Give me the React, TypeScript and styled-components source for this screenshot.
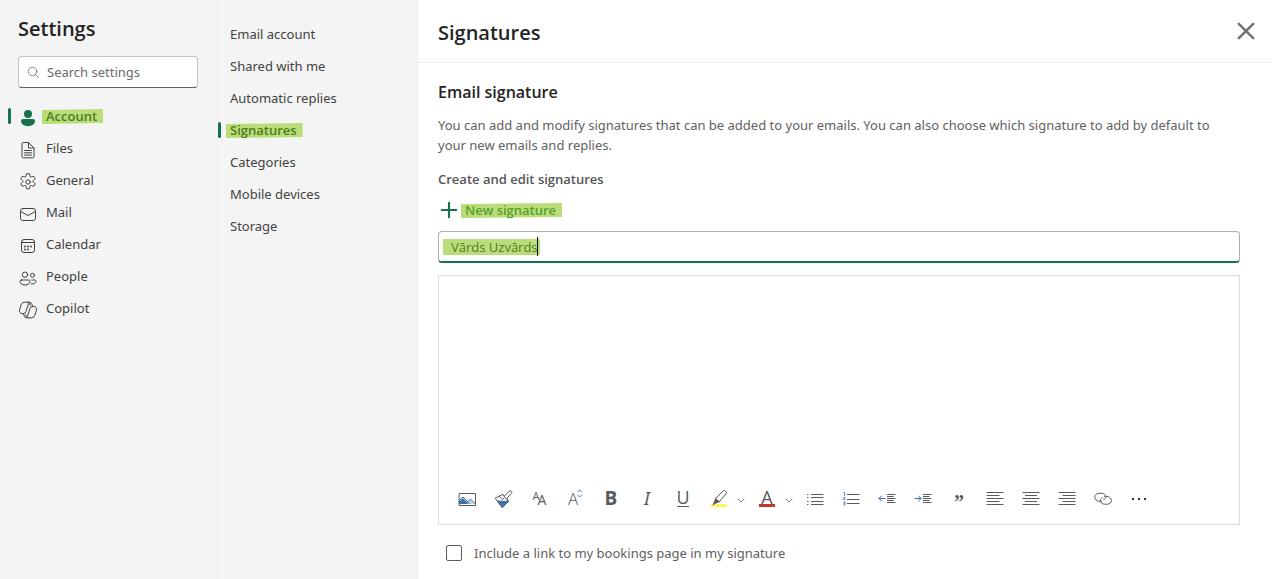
import React, { useState } from 'react';
import styled, { createGlobalStyle } from 'styled-components';

const green = '#17714f';
const ink = '#424242';
const marker = '#badd7a';
const displayFont = '"Open Sans", "Noto Sans", sans-serif';

const GlobalStyle = createGlobalStyle`
  * { box-sizing: border-box; }
  body {
    margin: 0;
    background: #ffffff;
    color: ${ink};
    font-family: "Noto Sans", "Open Sans", sans-serif;
    font-size: 13px;
    line-height: 20px;
  }
  button, input, textarea { font: inherit; color: inherit; }
`;

const Page = styled.div`
  display: grid;
  grid-template-columns: 218px 200px minmax(0, 1fr);
  min-height: 100vh;
`;

const Sidebar = styled.aside`
  background: #f4f4f4;
  border-right: 1px solid #f0f0f0;
  padding: 14px 19px 20px 8px;
`;

const AppTitle = styled.h1`
  margin: 0 0 12px 10px;
  font-family: ${displayFont};
  font-size: 20px;
  line-height: 30px;
  font-weight: 600;
  color: #242424;
`;

const SearchBox = styled.label`
  display: flex;
  align-items: center;
  gap: 7px;
  height: 32px;
  margin-left: 10px;
  padding: 0 8px;
  background: #ffffff;
  border: 1px solid #c6c6c6;
  border-bottom-color: #5c5c5c;
  border-radius: 4px;
  color: #6a6a6a;

  svg { flex: none; }
`;

const SearchInput = styled.input`
  flex: 1;
  min-width: 0;
  padding: 0;
  border: 0;
  outline: 0;
  background: transparent;

  &::placeholder { color: #6a6a6a; opacity: 1; }
`;

const NavList = styled.ul<{ $gap: number }>`
  list-style: none;
  margin: ${(p) => p.$gap}px 0 0;
  padding: 0;
`;

const NavLink = styled.a<{ $active?: boolean; $inset: number }>`
  display: flex;
  align-items: center;
  height: 32px;
  color: ${(p) => (p.$active ? '#4c7d1c' : ink)};
  font-family: ${(p) => (p.$active ? displayFont : 'inherit')};
  font-weight: ${(p) => (p.$active ? 600 : 400)};
  text-decoration: none;

  &::before {
    content: "";
    flex: none;
    width: 3px;
    height: 16px;
    margin-right: ${(p) => p.$inset}px;
    border-radius: 2px;
    background: ${(p) => (p.$active ? green : 'transparent')};
  }

  svg {
    flex: none;
    margin: 3px 8px 0 0;
    color: ${(p) => (p.$active ? green : ink)};
  }
`;

const Marked = styled.span`
  position: relative;
  isolation: isolate;

  &::before {
    content: "";
    position: absolute;
    z-index: -1;
    inset: 3px -6px 2px -4px;
    background: ${marker};
    clip-path: polygon(0 1px, 100% 0, 100% calc(100% - 1px), 0 100%);
  }
`;

const SubNav = styled.nav`
  background: #f4f4f4;
  border-right: 1px solid #ededed;
  padding-top: 18px;
`;

const Main = styled.main`
  display: flex;
  flex-direction: column;
`;

const Header = styled.header`
  display: flex;
  align-items: center;
  justify-content: space-between;
  height: 63px;
  padding: 0 16px 0 20px;
  border-bottom: 1px solid #ececec;
`;

const PanelTitle = styled.h2`
  margin: 0;
  padding-top: 4px;
  font-family: ${displayFont};
  font-size: 20px;
  line-height: 30px;
  font-weight: 600;
  color: #242424;
`;

const IconButton = styled.button`
  display: flex;
  padding: 0;
  border: 0;
  background: none;
  color: #747474;
  cursor: pointer;
`;

const Body = styled.div`
  padding: 18px 32px 16px 20px;
`;

const SectionTitle = styled.h3`
  margin: 0 0 12px;
  font-family: ${displayFont};
  font-size: 16px;
  line-height: 22px;
  font-weight: 600;
  color: #242424;
`;

const Description = styled.p`
  margin: 0;
  color: #616161;
`;

const GroupTitle = styled.h4`
  margin: 14px 0 0;
  font-family: ${displayFont};
  font-size: 13px;
  font-weight: 600;
  color: #555555;
`;

const NewButton = styled.button`
  display: flex;
  align-items: center;
  gap: 7px;
  height: 32px;
  margin: 5px 0;
  padding: 0 2px;
  border: 0;
  background: none;
  color: #55a02c;
  font-family: ${displayFont};
  font-weight: 600;
  cursor: pointer;

  svg { color: ${green}; }
`;

const NameField = styled.div`
  position: relative;
  display: flex;
  height: 32px;
  border: 1px solid #b0b0b0;
  border-bottom: 2px solid ${green};
  border-radius: 4px;
  font-family: ${displayFont};
`;

const NameMark = styled.span`
  position: absolute;
  left: 4px;
  top: 7px;
  height: 16px;
  padding: 0 2px 0 8px;
  background: ${marker};
  color: transparent;
  line-height: 16px;
  pointer-events: none;

  &::after {
    content: "";
    position: absolute;
    right: 2px;
    top: -2px;
    width: 1px;
    height: 19px;
    background: #111111;
  }
`;

const NameInput = styled.input`
  position: relative;
  flex: 1;
  min-width: 0;
  padding: 0 12px;
  border: 0;
  outline: 0;
  background: transparent;
  color: #4f7f23;
`;

const Editor = styled.div`
  display: flex;
  flex-direction: column;
  margin-top: 12px;
  border: 1px solid #dcdcdc;
`;

const EditorText = styled.textarea`
  display: block;
  height: 205px;
  padding: 10px 12px;
  border: 0;
  outline: 0;
  resize: none;
  background: transparent;
`;

const Toolbar = styled.div`
  display: flex;
  align-items: center;
  flex-wrap: wrap;
  padding: 0 10px 7px;
`;

const Tool = styled.button`
  display: flex;
  align-items: center;
  justify-content: center;
  width: 36px;
  height: 36px;
  padding: 0;
  border: 0;
  background: none;
  color: #5a5a5a;
  font-family: ${displayFont};
  cursor: pointer;
`;

const Caret = styled(Tool)`
  justify-content: flex-start;
  width: 12px;
`;

const CheckRow = styled.label`
  display: flex;
  align-items: center;
  gap: 12px;
  margin-top: 18px;
  padding-left: 8px;
  color: #616161;
`;

const Checkbox = styled.input`
  appearance: none;
  flex: none;
  width: 16px;
  height: 16px;
  margin: 0;
  border: 1px solid #5c5c5c;
  border-radius: 2px;
  background: #ffffff;

  &:checked { background: ${green}; }
`;

const Svg = styled.svg`
  overflow: visible;
`;

type IconProps = { size?: number; width?: number; children: React.ReactNode };

const Icon = ({ size = 20, width = 1, children }: IconProps) => (
  <Svg
    width={size}
    height={size}
    viewBox="0 0 20 20"
    fill="none"
    stroke="currentColor"
    strokeWidth={width}
    strokeLinecap="round"
    strokeLinejoin="round"
    aria-hidden="true"
  >
    {children}
  </Svg>
);

const icons = {
  account: (
    <g fill="currentColor" stroke="none">
      <circle cx="10" cy="6" r="4" />
      <path d="M5 11h10a2 2 0 0 1 2 2c0 3-3 5-7 5s-7-2-7-5a2 2 0 0 1 2-2Z" />
    </g>
  ),
  files: (
    <path d="M6 2.500h4.600L16 8v8.500a1.300 1.300 0 0 1-1.300 1.300H5.300A1.300 1.300 0 0 1 4 16.500V3.800A1.300 1.300 0 0 1 5.300 2.500H6M10.500 2.700V8H16M6.500 10.500h7M6.500 12.800h7M6.500 15.100h7" />
  ),
  general: (
    <>
      <circle cx="10" cy="10" r="2.200" />
      <path d="M8.500 1.800a8.500 8.500 0 0 1 3 0l.4 2.100a1.200 1.200 0 0 0 1.700 1l2-.8a8.400 8.400 0 0 1 1.600 2.700l-1.700 1.500a1.200 1.200 0 0 0 0 2l1.700 1.300a8.400 8.400 0 0 1-1.500 2.800l-2.100-.8a1.200 1.200 0 0 0-1.700 1l-.4 2.200a8.500 8.500 0 0 1-3 0l-.4-2.200a1.200 1.200 0 0 0-1.700-1l-2 .8a8.400 8.400 0 0 1-1.600-2.700l1.700-1.400a1.200 1.200 0 0 0 0-2L2.800 6.900a8.400 8.400 0 0 1 1.600-2.800l2 .8a1.200 1.200 0 0 0 1.700-1Z" />
    </>
  ),
  mail: (
    <>
      <rect x="2.500" y="4.500" width="15" height="12" rx="2.200" />
      <path d="m2.700 7.500 7.300 4 7.300-4" />
    </>
  ),
  calendar: (
    <>
      <rect x="3.500" y="3.500" width="13" height="13" rx="2.500" />
      <path d="M3.500 6.500h13" />
      <g fill="currentColor" stroke="none">
        <circle cx="7" cy="10.500" r="1" />
        <circle cx="10" cy="10.500" r="1" />
        <circle cx="13" cy="10.500" r="1" />
        <circle cx="7" cy="13.500" r="1" />
        <circle cx="10" cy="13.500" r="1" />
      </g>
    </>
  ),
  people: (
    <>
      <circle cx="7" cy="6.700" r="2.700" />
      <circle cx="14.500" cy="7.300" r="2" />
      <path d="M3.300 12h7.400a1.300 1.300 0 0 1 1.300 1.300C12 15.500 10 17 7 17s-5-1.500-5-3.700A1.300 1.300 0 0 1 3.300 12ZM13.700 12h3a1.300 1.300 0 0 1 1.300 1.300c0 1.700-1.600 2.900-4.700 2.700" />
    </>
  ),
  copilot: (
    <>
      <path d="M12.200 5.300 11.800 4a2.500 2.500 0 0 0-2.400-1.800H6.500a3.500 3.500 0 0 0-3.300 2.500L1.500 10a2.700 2.700 0 0 0 2.600 3.500h1.500a2.400 2.400 0 0 0 2.300-1.700l2.500-8" />
      <path d="m7.800 14.700.4 1.300a2.500 2.500 0 0 0 2.400 1.800h2.900a3.500 3.500 0 0 0 3.300-2.500l1.700-5.300a2.700 2.700 0 0 0-2.600-3.500h-1.500a2.400 2.400 0 0 0-2.300 1.700l-2.500 8" />
      <path d="M9.500 2.200h2a2.500 2.500 0 0 1 2.400 1.900l.7 2.400M10.500 17.800h-2a2.500 2.500 0 0 1-2.400-1.900l-.7-2.400" />
    </>
  ),
};

const accountNav: { key: keyof typeof icons; label: string }[] = [
  { key: 'account', label: 'Account' },
  { key: 'files', label: 'Files' },
  { key: 'general', label: 'General' },
  { key: 'mail', label: 'Mail' },
  { key: 'calendar', label: 'Calendar' },
  { key: 'people', label: 'People' },
  { key: 'copilot', label: 'Copilot' },
];

const sections = [
  'Email account',
  'Shared with me',
  'Automatic replies',
  'Signatures',
  'Categories',
  'Mobile devices',
  'Storage',
];

const glyph = { fill: 'currentColor', stroke: 'none', textAnchor: 'middle' as const };

const Chevron = () => (
  <svg width="8" height="8" viewBox="0 0 8 8" fill="none" stroke="#7b8794" aria-hidden="true">
    <path d="m.7 3.700 3.300 3.300 3.300-3.300" />
  </svg>
);

type ToolDef = { label: string; art: React.ReactNode; menu?: string };

const indentLines = (
  <path d="M10 5.500h8.500M10 7.500h6.500M10 9.500h8.500M10 11.500h6.500M10 13.500h8.500" strokeLinecap="butt" />
);

const tools: ToolDef[] = [
  {
    label: 'Insert picture',
    art: (
      <>
        <path d="M2 14.500v-2.500l4-4 5 5 2.500-2.500 4 4v.5Z" fill="#b9d3ec" stroke="none" />
        <path d="M2 15v-2l4-3.500 5.500 5.500Z" fill="#3a6ea5" stroke="none" />
        <path d="m2 12 4-4 6.500 6.500M11 12.500l2.500-2.500 4.500 4.500" stroke="#3a6ea5" />
        <path d="M2.500 4.500h16v12h-16Z" strokeLinejoin="miter" />
      </>
    ),
  },
  {
    label: 'Format painter',
    art: (
      <>
        <path d="m4.500 12 10.500.5-5.500 5.500Z" fill="#3f6db5" stroke="#3f6db5" />
        <path d="m2.500 9 7-3.500 6 7-6 6Z" />
        <path d="m9.500 5.500 2 1.300 4.700-4.500a1.500 1.500 0 0 1 2.200 2.200L14 9l1.500 3.500M6 7.300l3.500 3 1.500-1" />
      </>
    ),
  },
  {
    label: 'Font',
    art: (
      <>
        <text x="7" y="11" fontSize="11" {...glyph}>A</text>
        <text x="13" y="16" fontSize="14" {...glyph}>A</text>
      </>
    ),
  },
  {
    label: 'Font size',
    art: (
      <>
        <text x="8" y="16" fontSize="17" fontWeight="300" {...glyph}>A</text>
        <path d="m12.700 3 2-2 2 2M12.700 6l2 2 2-2" stroke="#4a86c5" />
      </>
    ),
  },
  { label: 'Bold', art: <text x="10" y="16" fontSize="19" fontWeight="700" {...glyph}>B</text> },
  {
    label: 'Italic',
    art: (
      <text x="10" y="16" fontSize="18" fontStyle="italic" fontWeight="400" fontFamily="Noto Sans" {...glyph}>I</text>
    ),
  },
  {
    label: 'Underline',
    art: (
      <>
        <text x="10" y="15" fontSize="18" {...glyph}>U</text>
        <path d="M4.500 17.500h11" />
      </>
    ),
  },
  {
    label: 'Highlight',
    menu: 'Highlight colours',
    art: (
      <>
        <path d="M2 15h16v3H2Z" fill="#fff45c" stroke="none" />
        <path d="m6.500 9.500 7.200-7.200a2 2 0 0 1 3.200 2.700l-6.400 7.500Z" />
        <path d="m6.500 9 4.500 4-3 1-4.500 2.500Z" fill="#5a5a5a" stroke="none" />
      </>
    ),
  },
  {
    label: 'Font colour',
    menu: 'Font colours',
    art: (
      <>
        <text x="10" y="15" fontSize="18" {...glyph}>A</text>
        <path d="M2 15h16v3H2Z" fill="#c0392b" stroke="none" />
      </>
    ),
  },
  {
    label: 'Bullets',
    art: <path d="M6 5.500h12.500M6 8.500h12.500M6 12.500h12.500M6 15.500h12.500M2 5.500h1.500M2 8.500h1.500M2 12.500h1.500M2 15.500h1.500" strokeLinecap="butt" />,
  },
  {
    label: 'Numbering',
    art: (
      <>
        <path d="M6 5.500h12.500M6 10.500h12.500M6 14.500h12.500" strokeLinecap="butt" />
        <path d="M2.500 3.500h1v3M2.500 8.500h1.500l-1.500 2H4M2.500 13h1.500v3H2.500M3 14.500h1" stroke="#5b8fc7" />
      </>
    ),
  },
  {
    label: 'Decrease indent',
    art: (
      <>
        {indentLines}
        <path d="M8 9.500H2M4.500 7 2 9.500 4.500 12" stroke="#2f6fb0" />
      </>
    ),
  },
  {
    label: 'Increase indent',
    art: (
      <>
        {indentLines}
        <path d="M2 9.500h6M5.500 7 8 9.500 5.500 12" stroke="#2f6fb0" />
      </>
    ),
  },
  {
    label: 'Quote',
    art: (
      <text x="10" y="20" fontSize="20" fontWeight="700" fontFamily="Liberation Serif" {...glyph}>”</text>
    ),
  },
  {
    label: 'Align left',
    art: <path d="M1.500 3.500h17M1.500 6.500h13M1.500 9.500h17M1.500 12.500h13M1.500 15.500h17" strokeLinecap="butt" />,
  },
  {
    label: 'Align centre',
    art: <path d="M1.500 3.500h17M4 6.500h12M1.500 9.500h17M4 12.500h12M1.500 15.500h17" strokeLinecap="butt" />,
  },
  {
    label: 'Align right',
    art: <path d="M1.500 3.500h17M5.500 6.500h13M1.500 9.500h17M5.500 12.500h13M1.500 15.500h17" strokeLinecap="butt" />,
  },
  {
    label: 'Insert link',
    art: (
      <>
        <path d="M8.500 12.300H6.500c-2.500 0-4.700-1.800-4.700-4.200s1.800-3.800 4.200-3.800h2.600c2.400 0 4.200 1.700 4.200 3.700 0 1.200-.8 2.200-2 2.700" />
        <path d="M11.500 7.300h2c2.700 0 4.900 1.900 4.900 4.200s-1.800 3.700-4.200 3.700h-2.600c-2.400 0-4.200-1.700-4.200-3.700 0-1.200.8-2.200 2-2.700" />
      </>
    ),
  },
  {
    label: 'More options',
    art: <path d="M3 9h2v2H3ZM9 9h2v2H9ZM15 9h2v2h-2Z" fill="#333333" stroke="none" />,
  },
];

export default function App() {
  const [name, setName] = useState('Vārds Uzvārds');

  return (
    <>
      <GlobalStyle />
      <Page>
        <Sidebar>
          <AppTitle>Settings</AppTitle>
          <SearchBox>
            <Icon size={13} width={1.200}>
              <circle cx="8.500" cy="8.500" r="6.500" />
              <path d="m13.300 13.300 4.700 4.700" />
            </Icon>
            <SearchInput type="text" placeholder="Search settings" aria-label="Search settings" />
          </SearchBox>
          <nav aria-label="Settings">
            <NavList $gap={12}>
              {accountNav.map(({ key, label }, i) => (
                <li key={key}>
                  <NavLink href={`#${key}`} $active={i === 0} $inset={7}>
                    <Icon>{icons[key]}</Icon>
                    {i === 0 ? <Marked>{label}</Marked> : label}
                  </NavLink>
                </li>
              ))}
            </NavList>
          </nav>
        </Sidebar>

        <SubNav aria-label="Account">
          <NavList $gap={0}>
            {sections.map((label) => (
              <li key={label}>
                <NavLink href="#account" $active={label === 'Signatures'} $inset={9}>
                  {label === 'Signatures' ? <Marked>{label}</Marked> : label}
                </NavLink>
              </li>
            ))}
          </NavList>
        </SubNav>

        <Main>
          <Header>
            <PanelTitle>Signatures</PanelTitle>
            <IconButton type="button" aria-label="Close">
              <Icon width={2.600}>
                <path d="m2.800 2.800 14.400 14.400m0-14.400-14.400 14.400" />
              </Icon>
            </IconButton>
          </Header>
          <Body>
            <SectionTitle>Email signature</SectionTitle>
            <Description>
              You can add and modify signatures that can be added to your emails. You can also choose which
              signature to add by default to your new emails and replies.
            </Description>
            <GroupTitle>Create and edit signatures</GroupTitle>
            <NewButton type="button">
              <Icon size={18} width={2.400}>
                <path d="M10 2v16M2 10h16" />
              </Icon>
              <Marked>New signature</Marked>
            </NewButton>
            <NameField>
              <NameMark aria-hidden="true">{name}</NameMark>
              <NameInput
                type="text"
                aria-label="Signature name"
                value={name}
                onChange={(e) => setName(e.target.value)}
              />
            </NameField>
            <Editor>
              <EditorText aria-label="Signature text" />
              <Toolbar role="toolbar" aria-label="Formatting">
                {tools.map(({ label, art, menu }) => (
                  <React.Fragment key={label}>
                    <Tool type="button" aria-label={label}>
                      <Icon>{art}</Icon>
                    </Tool>
                    {menu && (
                      <Caret type="button" aria-label={menu}>
                        <Chevron />
                      </Caret>
                    )}
                  </React.Fragment>
                ))}
              </Toolbar>
            </Editor>
            <CheckRow>
              <Checkbox type="checkbox" />
              Include a link to my bookings page in my signature
            </CheckRow>
          </Body>
        </Main>
      </Page>
    </>
  );
}
